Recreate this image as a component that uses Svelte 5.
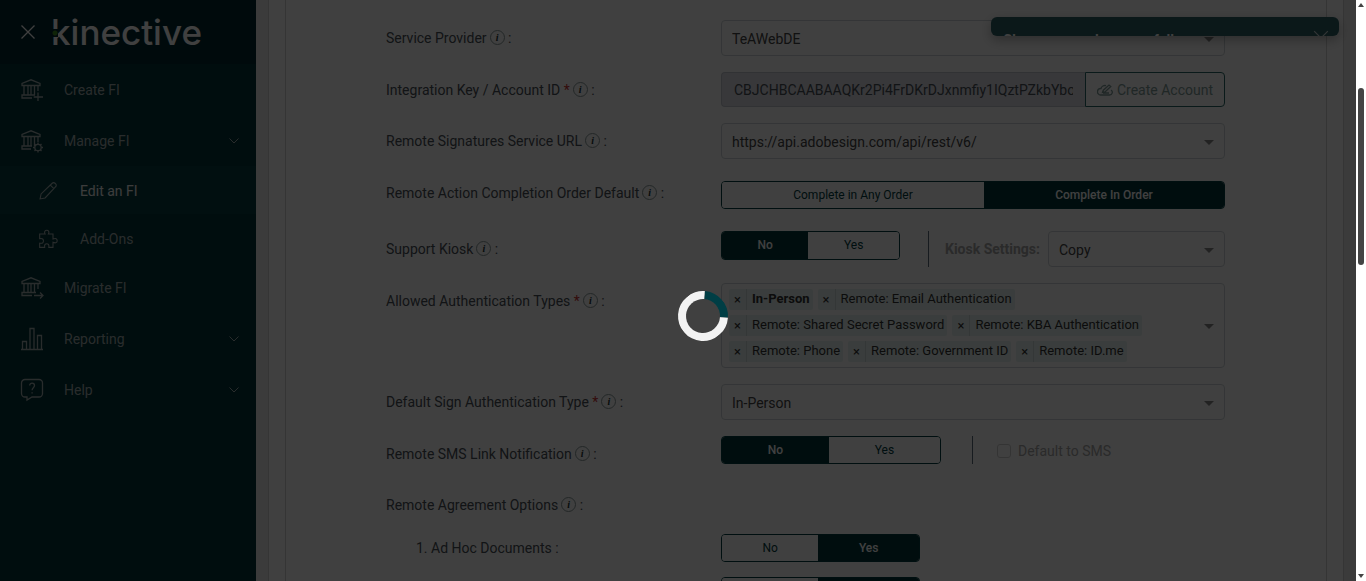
<script lang="ts">
	type NavItem = {
		label: string;
		icon: string;
		sub?: boolean;
		active?: boolean;
		expandable?: boolean;
	};

	const navItems: NavItem[] = [
		{ label: 'Create FI', icon: 'bank-add' },
		{ label: 'Manage FI', icon: 'bank-gear', expandable: true },
		{ label: 'Edit an FI', icon: 'pencil', sub: true, active: true },
		{ label: 'Add-Ons', icon: 'puzzle', sub: true },
		{ label: 'Migrate FI', icon: 'bank-arrow' },
		{ label: 'Reporting', icon: 'chart', expandable: true },
		{ label: 'Help', icon: 'help', expandable: true }
	];

	let authTypes = $state([
		'In-Person',
		'Remote: Email Authentication',
		'Remote: Shared Secret Password',
		'Remote: KBA Authentication',
		'Remote: Phone',
		'Remote: Government ID',
		'Remote: ID.me'
	]);

	let integrationKey = $state('CBJCHBCAABAAQKr2Pi4FrDKrDJxnmfiy1IQztPZkbYboT4');
	let completionOrder = $state('Complete In Order');
	let kiosk = $state('No');
	let smsLink = $state('No');
	let adHoc = $state('Yes');
	let library = $state('Yes');

	function removeType(type: string) {
		authTypes = authTypes.filter((t) => t !== type);
	}
</script>

{#snippet info()}
	<span class="info">i</span>
{/snippet}

{#snippet toggle(options: string[], value: string, size: string, pick: (v: string) => void)}
	<div class="toggle {size}" role="group">
		{#each options as option}
			<button
				type="button"
				class:on={option === value}
				aria-pressed={option === value}
				onclick={() => pick(option)}>{option}</button
			>
		{/each}
	</div>
{/snippet}

{#snippet navIcon(name: string)}
	<svg class="nav-icon" viewBox="0 0 24 24" aria-hidden="true">
		{#if name.startsWith('bank')}
			<path d="M2 7.500V5.500l9-3.700 9 3.700v2z" />
			<path d="M4 8v9M8 8v9M11 8v9M14.500 8v9M18 8v5" />
			{#if name === 'bank-add'}
				<path d="M15 17H2v3h10M18 14.500v8.500M13.700 19H23" />
			{:else if name === 'bank-gear'}
				<path d="M12 17H2v3h9" />
				<circle cx="18" cy="18.500" r="3.200" />
				<path
					d="M18 13.500v1.800M18 21.700v1.800M13 18.500h1.800M21.200 18.500H23M14.500 15l1.200 1.200M20.300 20.800l1.200 1.200M14.500 22l1.200-1.200M20.300 16.200l1.200-1.200"
				/>
			{:else}
				<path d="M16 16.500H2v3h10M14 19.500h9M20 16.500l3 3-3 3" />
			{/if}
		{:else if name === 'pencil'}
			<path
				d="M2.500 21.500l1.200-6L17 2.700a2.400 2.400 0 0 1 3.400 0l.8.8a2.400 2.400 0 0 1 0 3.400L8.500 20.300zM14.800 4.900l4.300 4.300"
			/>
		{:else if name === 'puzzle'}
			<path
				d="M2 6h6.500C7 3.500 8.500 1.500 10.500 1.500S14 3.500 12.500 6H18v6c3.500-1.500 5 0 5 2s-1.500 3.500-5 2V22h-5c.5-3.500-1-4.300-2.500-4.300s-3 .8-2.500 4.300H2v-5c3.800.8 4.500-1 4.500-2.700S5.800 10.800 2 11.600z"
			/>
		{:else if name === 'chart'}
			<path d="M1 22.500h22M2.500 22.500v-8h4v8M10 22.500V1.500h4v21M17.500 22.500v-14h4v14" />
		{:else}
			<path
				d="M5 1.500h14a3.500 3.500 0 0 1 3.500 3.500v10.500A3.500 3.500 0 0 1 19 19h-7l-5 3v-3H5a3.500 3.500 0 0 1-3.500-3.500V5A3.500 3.500 0 0 1 5 1.500z"
			/>
			<path d="M9.700 7.500c0-3.300 4.800-3.200 4.800 0 0 2.200-2.400 2.200-2.400 4.700M12.100 14.200v1.300" />
		{/if}
	</svg>
{/snippet}

<div class="page">
	<div class="shell">
		<aside class="sidebar">
			<div class="brand">
				<button type="button" class="collapse" aria-label="Close menu">
					<svg viewBox="0 0 14 14"><path d="M.5.5l13 13M13.500.5l-13 13" /></svg>
				</button>
				<a href="/" class="logo">kinective</a>
			</div>
			<nav>
				{#each navItems as item}
					<a href="/" class="nav-item" class:sub={item.sub} class:active={item.active}>
						{@render navIcon(item.icon)}
						<span>{item.label}</span>
						{#if item.expandable}
							<svg class="chevron" viewBox="0 0 10 6"><path d="M.5.5L5 5 9.500.5" /></svg>
						{/if}
					</a>
				{/each}
			</nav>
		</aside>

		<main>
			<div class="card">
				<form class="panel">
					<div class="row">
						<label for="provider">Service Provider{@render info()} :</label>
						<div class="select">
							<select id="provider"><option>TeAWebDE</option></select>
						</div>
					</div>

					<div class="row">
						<label for="key"
							>Integration Key / Account ID <span class="required">*</span>{@render info()} :</label
						>
						<div class="key-group">
							<input id="key" type="text" readonly value={integrationKey} />
							<button type="button">
								<svg viewBox="0 0 16 12" aria-hidden="true">
									<path
										d="M9 1.700A4 4 0 0 0 4 4.500 3.200 3.200 0 0 0 3.500 11h9a2.700 2.700 0 0 0 1.500-5M5.500 8.500l.8-2.300L12 1l1.800 1.500L8 8zM6 9h6"
									/>
								</svg>
								Create Account
							</button>
						</div>
					</div>

					<div class="row">
						<label for="url">Remote Signatures Service URL{@render info()} :</label>
						<div class="select">
							<select id="url"><option>https://api.adobesign.com/api/rest/v6/</option></select>
						</div>
					</div>

					<div class="row order">
						<span class="label">Remote Action Completion Order Default{@render info()} :</span>
						{@render toggle(
							['Complete in Any Order', 'Complete In Order'],
							completionOrder,
							'full',
							(v) => (completionOrder = v)
						)}
					</div>

					<div class="row">
						<span class="label">Support Kiosk{@render info()} :</span>
						<div class="inline">
							{@render toggle(['No', 'Yes'], kiosk, 'small', (v) => (kiosk = v))}
							<div class="kiosk">
								<label for="kiosk-settings">Kiosk Settings:</label>
								<div class="select">
									<select id="kiosk-settings"><option>Copy</option></select>
								</div>
							</div>
						</div>
					</div>

					<div class="row">
						<span class="label"
							>Allowed Authentication Types <span class="required">*</span>{@render info()} :</span
						>
						<div class="select tags">
							{#each authTypes as type, i}
								<span class="tag" class:strong={i === 0}>
									<button type="button" aria-label="Remove {type}" onclick={() => removeType(type)}
										>×</button
									>
									<span>{type}</span>
								</span>
							{/each}
						</div>
					</div>

					<div class="row">
						<label for="default-auth"
							>Default Sign Authentication Type <span class="required">*</span>{@render info()} :</label
						>
						<div class="select">
							<select id="default-auth"><option>In-Person</option></select>
						</div>
					</div>

					<div class="row">
						<span class="label">Remote SMS Link Notification{@render info()} :</span>
						<div class="inline">
							{@render toggle(['No', 'Yes'], smsLink, 'large', (v) => (smsLink = v))}
							<div class="sms">
								<input id="sms" type="checkbox" disabled />
								<label for="sms">Default to SMS</label>
							</div>
						</div>
					</div>

					<div class="row heading">
						<span class="label">Remote Agreement Options{@render info()} :</span>
					</div>

					<div class="row option">
						<span class="label">1. Ad Hoc Documents :</span>
						{@render toggle(['No', 'Yes'], adHoc, 'medium', (v) => (adHoc = v))}
					</div>

					<div class="row option">
						<span class="label"></span>
						{@render toggle(['No', 'Yes'], library, 'medium', (v) => (library = v))}
					</div>
				</form>
			</div>
		</main>

		<div class="toast" role="status">
			<span>Changes saved successfully.</span>
			<button type="button" aria-label="Dismiss">
				<svg viewBox="0 0 14 14"><path d="M1 1l12 12M13 1L1 13" /></svg>
			</button>
		</div>

		<div class="overlay">
			<div class="spinner"></div>
		</div>
	</div>

	<div class="scrollbar" aria-hidden="true">
		<span class="arrow up"></span>
		<span class="thumb"></span>
		<span class="arrow down"></span>
	</div>
</div>

<style>
	:global(body) {
		margin: 0;
		background: #fff;
	}

	.page {
		display: flex;
		height: 100vh;
		overflow: hidden;
		font-family: Roboto, 'Liberation Sans', sans-serif;
		font-size: 14px;
		color: #495057;
	}

	.page * {
		box-sizing: border-box;
	}

	button,
	input,
	select {
		font: inherit;
		margin: 0;
	}

	button {
		cursor: pointer;
	}

	svg {
		fill: none;
		stroke: currentColor;
	}

	.shell {
		position: relative;
		flex: 1;
		display: flex;
		min-width: 0;
		overflow: hidden;
	}

	/* sidebar */
	.sidebar {
		flex: none;
		width: 256px;
		background: #003438;
	}

	.brand {
		display: flex;
		align-items: center;
		gap: 16px;
		height: 64px;
		padding-left: 21px;
		background: #002830;
	}

	.collapse {
		display: flex;
		padding: 0;
		border: 0;
		background: none;
		color: #fff;
	}

	.collapse svg {
		width: 14px;
		height: 14px;
		stroke-width: 1.3;
	}

	.logo {
		position: relative;
		font-family: Inter, sans-serif;
		font-size: 35px;
		font-weight: 500;
		line-height: 40px;
		color: #fff;
		text-decoration: none;
	}

	/* the green node that splits the stem of the k */
	.logo::before {
		content: '';
		position: absolute;
		left: 1px;
		top: 17px;
		width: 6px;
		height: 8px;
		background: radial-gradient(circle, #3f8f20 2px, #002830 3px);
	}

	.nav-item {
		display: flex;
		align-items: center;
		gap: 20px;
		height: 51px;
		padding: 0 17px 0 20px;
		color: #a4b0b0;
		text-decoration: none;
	}

	.nav-item.sub {
		height: 48px;
		padding-top: 2px;
		padding-left: 38px;
		gap: 22px;
	}

	.nav-item.active {
		background: #053e42;
		color: #f0f0f0;
	}

	.nav-icon {
		width: 24px;
		height: 24px;
		color: #a4b0b0;
		stroke-width: 1.3;
	}

	.sub .nav-icon {
		width: 20px;
		height: 20px;
	}

	.chevron {
		width: 10px;
		height: 6px;
		margin-left: auto;
	}

	/* form */
	main {
		flex: 1;
		min-width: 0;
		padding: 0 12px;
		background: #ececec;
	}

	.card {
		padding: 0 16px;
		border: solid #d4d4d4;
		border-width: 0 1px;
		background: #fff;
	}

	.panel {
		padding: 20px 101px 0 100px;
		border: solid #d4d4d4;
		border-width: 0 1px;
	}

	.row {
		display: grid;
		grid-template-columns: 335px minmax(0, 1fr);
		align-items: start;
		min-height: 35px;
		margin-bottom: 16px;
	}

	.row > label,
	.label {
		line-height: 36px;
		height: 35px;
		white-space: nowrap;
	}

	.required {
		color: #c33;
	}

	.info {
		display: inline-block;
		width: 15px;
		height: 15px;
		margin-left: 3px;
		border: 1px solid #8a9a9a;
		border-radius: 50%;
		font: italic bold 10px/13px 'Liberation Serif', serif;
		text-align: center;
		vertical-align: 2px;
		color: #233;
	}

	.select {
		position: relative;
		min-width: 0;
	}

	.select::after {
		content: '';
		position: absolute;
		top: 17px;
		right: 11px;
		border: 5px solid transparent;
		border-top-color: #888;
		border-bottom: 0;
	}

	.select select {
		display: block;
		appearance: none;
		width: 100%;
		height: 36px;
		padding: 2px 24px 0 10px;
		border: 1px solid #ced4da;
		border-radius: 4px;
		background: #fff;
		color: #444;
	}

	.key-group {
		display: flex;
		height: 35px;
	}

	.key-group input {
		flex: 1;
		min-width: 0;
		padding: 0 12px;
		border: 1px solid #c4c8d0;
		border-right: 0;
		border-radius: 4px 0 0 4px;
		background: #dedee6;
		color: #495057;
	}

	.key-group button {
		display: flex;
		align-items: center;
		justify-content: center;
		gap: 4px;
		width: 140px;
		padding: 0;
		border: 1px solid #2a6a68;
		border-radius: 0 4px 4px 0;
		background: #fff;
		color: #7f9c99;
	}

	.key-group svg {
		width: 16px;
		height: 12px;
		stroke-width: 1.3;
	}

	.toggle {
		display: flex;
		height: 28px;
		border: 1px solid #003c40;
		border-radius: 4px;
		overflow: hidden;
	}

	.toggle.small {
		width: 179px;
		height: 29px;
	}

	.toggle.medium {
		width: 199px;
	}

	.toggle.large {
		width: 220px;
	}

	.toggle button {
		flex: 1 1 auto;
		padding: 0 0 1px;
		border: 0;
		background: #fff;
		color: #003c40;
		font-size: 12px;
	}

	.toggle button.on {
		background: #003438;
		color: #fff;
		font-weight: 500;
	}

	.order {
		min-height: 40px;
	}

	.order .label {
		height: 36px;
	}

	.row:has(> .select) {
		min-height: 36px;
	}

	.order .toggle {
		margin-top: 6px;
	}

	.inline {
		display: flex;
		align-items: flex-start;
		height: 36px;
	}

	.kiosk {
		flex: 1;
		display: flex;
		align-items: center;
		gap: 8px;
		margin-left: 28px;
		padding-left: 16px;
		border-left: 1px solid #5c6c7c;
	}

	.kiosk label {
		font-weight: 700;
		color: #a8a8a8;
	}

	.kiosk .select {
		flex: 1;
	}

	.sms {
		display: flex;
		align-items: center;
		gap: 7px;
		height: 28px;
		margin-left: 31px;
		padding-top: 2px;
		padding-left: 24px;
		border-left: 1px solid #5c6c7c;
		color: #a8a8a8;
	}

	.sms input {
		appearance: none;
		width: 14px;
		height: 14px;
		border: 1px solid #d0d0d0;
		border-radius: 3px;
	}

	.tags {
		display: flex;
		flex-wrap: wrap;
		gap: 5px;
		padding: 5px 60px 5px 7px;
		border: 1px solid #ced4da;
		border-radius: 4px;
		font-size: 13px;
	}

	.tags::after {
		top: 40px;
		right: 10px;
	}

	.tag {
		display: flex;
		height: 21px;
		border-radius: 2px;
		background: #e6f4f1;
		color: #333;
		line-height: 20px;
	}

	.tag button {
		width: 18px;
		padding: 0;
		border: 0;
		border-right: 1px solid #cedcd9;
		background: none;
		color: #333;
		line-height: 20px;
	}

	.tag span {
		padding: 0 3px 0 5px;
	}

	.tag.strong span {
		font-weight: 700;
	}

	.heading {
		margin-bottom: 11px;
	}

	.heading .label {
		line-height: 34px;
	}

	.option {
		min-height: 28px;
		margin-bottom: 15px;
	}

	.option .label {
		height: 28px;
		padding-left: 30px;
		line-height: 28px;
	}

	/* layers above the form */
	.toast {
		position: absolute;
		top: 17px;
		right: 17px;
		display: flex;
		justify-content: space-between;
		align-items: flex-start;
		width: 348px;
		height: 19px;
		padding: 13px 10px 0 12px;
		border-radius: 6px;
		overflow: hidden;
		background: #2c6066;
		box-shadow: 0 4px 12px rgba(0, 0, 0, 0.3);
		color: #fff;
		font-weight: 700;
		line-height: 20px;
	}

	.toast button {
		padding: 0;
		border: 0;
		background: none;
		color: #c8d4d4;
	}

	.toast svg {
		display: block;
		width: 16px;
		height: 16px;
	}

	.overlay {
		position: absolute;
		inset: 0;
		background: rgba(0, 0, 0, 0.75);
	}

	.spinner {
		position: absolute;
		top: 50%;
		left: 50%;
		width: 50px;
		height: 50px;
		border: 8px solid #f3f3f3;
		border-top-color: #003e45;
		border-radius: 50%;
		transform: rotate(49deg);
	}

	.scrollbar {
		flex: none;
		display: flex;
		flex-direction: column;
		align-items: center;
		width: 10px;
		padding: 3px 0;
		box-sizing: border-box;
		background: #fff;
	}

	.arrow {
		border: 3px solid transparent;
	}

	.up {
		border-top: 0;
		border-bottom: 4px solid #444;
	}

	.down {
		margin-top: auto;
		border-bottom: 0;
		border-top: 4px solid #444;
	}

	.thumb {
		width: 6px;
		height: 177px;
		margin-top: 81px;
		border-radius: 3px;
		background: #444;
	}
</style>
